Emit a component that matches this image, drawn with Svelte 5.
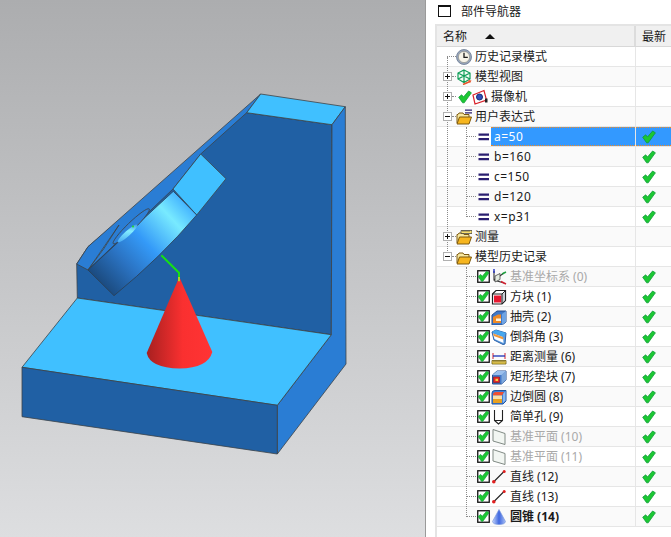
<script>
    // Tree rows of the part navigator
    const rows = [
        { label: "历史记录模式", icon: "clock", stub: "long" },
        { label: "模型视图", icon: "views", toggle: "+" },
        { label: "摄像机", icon: "camera", toggle: "+", tick: true },
        { label: "用户表达式", icon: "folderExpr", toggle: "-" },
        { label: "a=50", icon: "eq", level: 1, latest: true, selected: true },
        { label: "b=160", icon: "eq", level: 1, latest: true },
        { label: "c=150", icon: "eq", level: 1, latest: true },
        { label: "d=120", icon: "eq", level: 1, latest: true },
        { label: "x=p31", icon: "eq", level: 1, latest: true },
        { label: "测量", icon: "folderRuler", toggle: "+" },
        { label: "模型历史记录", icon: "folder", toggle: "-" },
        { label: "基准坐标系 (0)", icon: "datum", level: 1, box: true, latest: true, muted: true },
        { label: "方块 (1)", icon: "block", level: 1, box: true, latest: true },
        { label: "抽壳 (2)", icon: "shell", level: 1, box: true, latest: true },
        { label: "倒斜角 (3)", icon: "chamfer", level: 1, box: true, latest: true },
        { label: "距离测量 (6)", icon: "measure", level: 1, box: true, latest: true },
        { label: "矩形垫块 (7)", icon: "pad", level: 1, box: true, latest: true },
        { label: "边倒圆 (8)", icon: "blend", level: 1, box: true, latest: true },
        { label: "简单孔 (9)", icon: "hole", level: 1, box: true, latest: true },
        { label: "基准平面 (10)", icon: "plane", level: 1, box: true, latest: true, muted: true },
        { label: "基准平面 (11)", icon: "plane", level: 1, box: true, latest: true, muted: true },
        { label: "直线 (12)", icon: "line", level: 1, box: true, latest: true },
        { label: "直线 (13)", icon: "line", level: 1, box: true, latest: true },
        { label: "圆锥 (14)", icon: "cone", level: 1, box: true, latest: true, bold: true }
    ];

    const rowH = 20;

    // Dotted vertical guides: x inside the tree, first and last row
    const guides = [
        { x: 10, top: 10, bottom: 10 * rowH + 10 },
        { x: 29, top: 4 * rowH, bottom: 8 * rowH + 10 },
        { x: 29, top: 11 * rowH, bottom: 23 * rowH + 10 }
    ];
</script>

{#snippet tickMark()}
    <path d="M0.700 7.200L3.700 4.800L5.500 7L10.600 1L13.400 2.800L6.200 12.800H4.600Z" fill="#1cc832" stroke="#0f9c3a" stroke-width="0.800" />
{/snippet}

{#snippet icon(name)}
    {#if name === "eq"}
        <svg width="14" height="16" viewBox="0 0 14 16"><path d="M1.500 4.500h10.500v2.300H1.500zM1.500 9h10.500v2.300H1.500z" fill="#2b1f70" /></svg>
    {:else}
        <svg width="16" height="16" viewBox="0 0 16 16">
            {#if name === "clock"}
                <circle cx="8" cy="8" r="7.500" fill="#98a6bc" stroke="#6a7890" stroke-width="0.800" />
                <circle cx="8" cy="8" r="5.600" fill="#f6f3e8" stroke="#8a8a80" stroke-width="0.600" />
                <path d="M8 3.800V8.300H11.800" fill="none" stroke="#1c1c1c" stroke-width="1.300" />
            {:else if name === "views"}
                <path d="M8 1L14 4V10L8 13.500L2 10V4Z" fill="#f2fbf5" />
                <path d="M8 1L14 4V10L8 13.500L2 10V4Z M2 4L8 7L14 4 M8 7V13.500 M2 10L8 7L14 10 M8 1V7" fill="none" stroke="#0f9e58" stroke-width="1.200" />
                <path d="M7 15.500L14 12.500" stroke="#e8552a" stroke-width="1.600" />
                <path d="M12 11L15.500 11.500L14 14Z" fill="#e8552a" />
            {:else if name === "camera"}
                <path d="M1 6L12 1.500L14.500 11L3 15Z" fill="#fff" stroke="#d8202a" stroke-width="1.200" />
                <circle cx="7.500" cy="8" r="3" fill="#2f4fb8" stroke="#1b2c78" />
                <path d="M13 9.500h2.500v4H13z" fill="#222" />
            {:else if name === "folder" || name === "folderExpr" || name === "folderRuler"}
                <path d="M1 14V5.500H2L3 4H7L8 5.500H13V8" fill="#f8e8a0" stroke="#7d5a10" />
                <path d="M1 15L3.500 8H15.500L13 15Z" fill="#f6b51e" stroke="#7d5a10" />
                {#if name === "folderExpr"}
                    <path d="M9 0.500h7v1.200H9zM9 3.300h7v1.200H9z" fill="#2b1f70" />
                {:else if name === "folderRuler"}
                    <path d="M5 1.500h11v3H5z" fill="#f8e070" stroke="#333" stroke-width="0.700" />
                    <path d="M7 1.500v1.500M9 1.500v1.500M11 1.500v1.500M13 1.500v1.500" stroke="#333" stroke-width="0.600" />
                {/if}
            {:else if name === "datum"}
                <path d="M3 2V11L13 14M3 11L13 4" fill="none" stroke="#333" stroke-width="1.100" />
                <path d="M4 7L9 4.500V10.500L4 13Z" fill="#e4ece0" stroke="#444" stroke-width="0.800" />
                <path d="M3 0V4" stroke="#2030c0" stroke-width="1.400" />
                <path d="M10 12.500L15 15" stroke="#d02030" stroke-width="1.400" />
                <path d="M11 5L15 3" stroke="#20a040" stroke-width="1.400" />
            {:else if name === "block"}
                <path d="M1.500 5L5 1.500H14.500V11.500L11 15H1.500Z" fill="#fff" stroke="#222" stroke-width="1.200" />
                <path d="M3 6.500H10.500V13.500H3Z" fill="#e81830" />
                <path d="M10.500 6L14 2.500V11L10.500 14Z" fill="#c8ccd4" />
                <path d="M1.500 5H11V15M11 5L14.500 1.500" fill="none" stroke="#222" />
            {:else if name === "shell"}
                <path d="M1 6L6 2H15V13L11 16H1Z" fill="#3f78c8" stroke="#274f90" />
                <path d="M11 5L15 2V13L11 16Z" fill="#6ea4e4" />
                <path d="M2 8L7 5.500H10V14H2Z" fill="#f08a24" />
                <path d="M5 9.500H10V12H5Z" fill="#fff2d8" />
            {:else if name === "chamfer"}
                <path d="M1 3L5 1L15 4L14 15L12 15.500L3 11Z" fill="#5a9be0" stroke="#2d62a8" />
                <path d="M2 4.500L12 8L12.500 14L3.500 10Z" fill="#fff" />
                <path d="M2 4.500L12 8L12.300 10.500L2.800 7Z" fill="#f29a3a" />
                <path d="M1 3L5 1L15 4L12 7.500Z" fill="#47a8ee" />
            {:else if name === "measure"}
                <path d="M1 11.500H15V15H1Z" fill="#f8d850" stroke="#6a5a10" stroke-width="0.800" />
                <path d="M3 12v1.500M5 12v1.500M7 12v1.500M9 12v1.500M11 12v1.500M13 12v1.500" stroke="#333" stroke-width="0.700" />
                <path d="M2 4V10M14 4V10" stroke="#d02030" stroke-width="1" />
                <path d="M2 7H14" stroke="#1830b8" stroke-width="1.300" />
            {:else if name === "pad"}
                <path d="M1.500 6L6 2H15V11L10.500 15H1.500Z" fill="#4478c8" stroke="#2a5090" />
                <path d="M10.500 6L15 2V11L10.500 15Z" fill="#7ea8dc" />
                <path d="M1.500 6L6 2H15L10.500 6Z" fill="#9cc0ec" />
                <path d="M2.500 8H8.500V13.500H2.500Z" fill="#e42828" stroke="#901818" stroke-width="0.600" />
                <path d="M4.500 9.800H7V12H4.500Z" fill="#f8d040" />
            {:else if name === "blend"}
                <path d="M1 4Q1 1.500 4 1.500H15V12L12 15H1Z" fill="#3f80d8" stroke="#24559c" />
                <path d="M2 5Q2.500 3 5 3H13L11 6.500H2Z" fill="#f05030" />
                <path d="M2 6.500H11V10H2Z" fill="#f8e0a8" />
                <path d="M2 10H11V14H2Z" fill="#e8a020" />
                <path d="M12 5L14.500 2V11.500L12 14Z" fill="#88b8f0" />
            {:else if name === "hole"}
                <path d="M3.500 1V11.500L7.500 15L11.500 11.500V1M3.500 11.500H11.500" fill="none" stroke="#222" stroke-width="1.100" />
            {:else if name === "plane"}
                <path d="M2 0.500L14 4.500V15.500L2 12Z" fill="#f2f6f2" stroke="#808a84" />
            {:else if name === "line"}
                <path d="M2.500 13L13.500 2" stroke="#222" stroke-width="1.100" />
                <circle cx="2.800" cy="12.800" r="1.800" fill="#e02020" />
                <circle cx="13.200" cy="2.500" r="1.500" fill="#e02020" />
            {:else if name === "cone"}
                <path d="M8 0.500L14.500 12.500Q14 15.500 8 15.500Q2 15.500 1.500 12.500Z" fill="url(#cone-icon)" stroke="#7090d8" stroke-width="0.600" />
            {/if}
        </svg>
    {/if}
{/snippet}

<div class="app">
    <div class="viewport">
        <svg class="model" width="426" height="537" viewBox="0 0 426 537">
            <defs>
                <linearGradient id="coneFill" x1="147" y1="0" x2="212" y2="0" gradientUnits="userSpaceOnUse">
                    <stop offset="0" stop-color="#a82020" />
                    <stop offset="0.55" stop-color="#fa3030" />
                    <stop offset="1" stop-color="#ff3434" />
                </linearGradient>
                <linearGradient id="diskFill" x1="100" y1="283" x2="186" y2="203" gradientUnits="userSpaceOnUse">
                    <stop offset="0" stop-color="#1b4a7e" />
                    <stop offset="0.28" stop-color="#2b74c4" />
                    <stop offset="0.52" stop-color="#349af8" />
                    <stop offset="0.82" stop-color="#78eaff" />
                    <stop offset="1" stop-color="#44b4ff" />
                </linearGradient>
                <linearGradient id="holeFill" x1="118" y1="241" x2="137" y2="225" gradientUnits="userSpaceOnUse">
                    <stop offset="0" stop-color="#3d9cf0" />
                    <stop offset="0.6" stop-color="#84eeff" />
                    <stop offset="1" stop-color="#2f80d8" />
                </linearGradient>
                <linearGradient id="cone-icon" x1="0" y1="0" x2="1" y2="0">
                    <stop offset="0" stop-color="#c4d4fa" />
                    <stop offset="0.5" stop-color="#3f68e0" />
                    <stop offset="1" stop-color="#a8bef4" />
                </linearGradient>
            </defs>

            <g stroke="#3c4248" stroke-width="0.800" stroke-linejoin="round">
                <!-- upright wall -->
                <path class="dark" d="M76.700 264L88 246.700L246.700 112.700L332 124.700L331.300 334.700L77.300 298Z" />
                <path class="mid" d="M76.700 264L88 246.700L260.700 94L246.700 112.700L200.700 154L173 189L88 270Z" />
                <path class="light" d="M260.700 94L345.300 106.700L332 124.700L246.700 112.700Z" />
                <path class="mid" d="M345.300 106.700L346 364L277.300 454V405.300L331.300 334.700L332 124.700Z" />

                <!-- base block -->
                <path class="light" d="M77.300 298L331.300 334.700L277.300 405.300L22 367.300Z" />
                <path class="dark" d="M22 367.300L277.300 405.300V454L22 416.700Z" />

                <!-- tab behind the disk -->
                <path class="light" d="M173 189L200.700 154L226 178.700L196.700 215Z" />

                <!-- disk -->
                <path d="M88 270L173.300 191.300L196.700 215Q160 258 114 295.700Z" fill="url(#diskFill)" stroke="#2c3e50" />
                <path d="M88 270L119 225Q104 250 88 270Z" fill="#3d9cf0" />
                <ellipse cx="131.200" cy="226.300" rx="25" ry="3.800" transform="rotate(-44 131.200 226.300)" fill="#2d80d8" />
                <ellipse cx="127.500" cy="233.500" rx="13" ry="2.600" transform="rotate(-42 127.500 233.500)" fill="url(#holeFill)" stroke="none" />
            </g>
            <circle cx="133" cy="226.500" r="1" fill="#22e022" />

            <!-- cone and its sketch line -->
            <path d="M179.300 277L146.700 353Q150 368 179.500 368.500Q208 368 212.300 352Z" fill="url(#coneFill)" />
            <path d="M161.300 255.300L179 272.700V277" fill="none" stroke="#16e016" stroke-width="2" />
            <path d="M179 277V281.300" fill="none" stroke="#b4d020" stroke-width="2" />
        </svg>
    </div>

    <div class="panel">
        <div class="title">
            <span class="window-box"></span>
            <span>部件导航器</span>
        </div>

        <div class="table">
            <div class="head">
                <div class="head-name">
                    <span>名称</span>
                    <span class="sort-arrow"></span>
                </div>
                <div class="head-latest">最新</div>
            </div>

            <div class="tree">
                {#each guides as g}
                    <span class="guide" style="left: {g.x}px; top: {g.top}px; height: {g.bottom - g.top}px"></span>
                {/each}

                {#each rows as row, i}
                    <div class="row" class:alt={i % 2 === 1}>
                        <div class="name" class:nested={row.level === 1}>
                            {#if row.level === 1}
                                <span class="stub nested-stub"></span>
                                {#if row.box}
                                    <svg class="checkbox" width="13" height="13" viewBox="0 0 13 13">
                                        <rect x="0.750" y="0.750" width="11.500" height="11.500" fill="#fff" stroke="#111" stroke-width="1.300" />
                                        <g transform="translate(0.500 0.300) scale(0.860)">{@render tickMark()}</g>
                                    </svg>
                                {/if}
                            {:else}
                                <span class="stub" class:long={row.stub === "long"}></span>
                                {#if row.toggle}
                                    <span class="toggle">
                                        <svg width="9" height="9" viewBox="0 0 9 9">
                                            <rect x="0.500" y="0.500" width="8" height="8" fill="#fff" stroke="#b0b0b0" />
                                            <path d={row.toggle === "+" ? "M2 4.500H7M4.500 2V7" : "M2 4.500H7"} stroke="#111" />
                                        </svg>
                                    </span>
                                {:else}
                                    <span class="toggle"></span>
                                {/if}
                                {#if row.tick}
                                    <svg class="tick-slot" width="16" height="14" viewBox="-2 0 16 14">{@render tickMark()}</svg>
                                {/if}
                            {/if}
                            {@render icon(row.icon)}
                            <span class="label" class:selected={row.selected} class:expr={row.icon === "eq"} class:muted={row.muted} class:bold={row.bold}>{row.label}</span>
                        </div>
                        <div class="latest" class:selected={row.selected}>
                            {#if row.latest}
                                <svg width="14" height="14" viewBox="0 0 14 14">{@render tickMark()}</svg>
                            {/if}
                        </div>
                    </div>
                {/each}
            </div>
        </div>
    </div>
</div>

<style>
    :global(body) {
        margin: 0;
        overflow: hidden;
    }

    .app {
        display: flex;
        width: 671px;
        height: 537px;
        font-family: "Noto Sans", "Noto Sans CJK SC", sans-serif;
        font-size: 12px;
        color: #1a1a1a;
    }

    .viewport {
        width: 425px;
        flex: none;
        background: linear-gradient(#acadaf 0%, #dddee0 100%);
        border-right: 1px solid #9a9a9a;
        overflow: hidden;
    }

    .model {
        display: block;
    }

    .dark {
        fill: #2060a4;
    }

    .mid {
        fill: #2a7dd4;
    }

    .light {
        fill: #40c0ff;
    }

    .panel {
        flex: 1;
        min-width: 0;
        background: #fff;
        display: flex;
        flex-direction: column;
    }

    .title {
        height: 24px;
        display: flex;
        align-items: center;
        padding: 0 0 2px 12px;
        box-sizing: border-box;
    }

    .window-box {
        width: 11px;
        height: 9px;
        border: 1px solid #111;
        border-top-width: 2px;
        margin-right: 10px;
    }

    .table {
        margin-left: 9px;
        border-top: 2px solid #e4e4e4;
        border-left: 2px solid #e4e4e4;
        flex: 1;
    }

    .head {
        display: flex;
        height: 20px;
        background: #f0f0f0;
        border-bottom: 1px solid #d8d8d8;
    }

    .head-name {
        width: 199px;
        display: flex;
        align-items: center;
        padding-left: 6px;
        box-sizing: border-box;
        border-right: 2px solid #dcdcdc;
    }

    .sort-arrow {
        width: 0;
        height: 0;
        margin-left: 18px;
        border-left: 5px solid transparent;
        border-right: 5px solid transparent;
        border-bottom: 5px solid #111;
    }

    .head-latest {
        flex: 1;
        display: flex;
        align-items: center;
        padding-left: 6px;
    }

    .tree {
        position: relative;
    }

    .guide {
        position: absolute;
        width: 0;
        border-left: 1px dotted #8a8a8a;
    }

    .row {
        display: flex;
        height: 20px;
        box-sizing: border-box;
        border-bottom: 1px solid #e6e6e6;
    }

    .row.alt {
        background: #fafafa;
    }

    .name {
        position: relative;
        width: 199px;
        display: flex;
        align-items: center;
        padding-left: 6px;
        box-sizing: border-box;
        border-right: 1px solid #e6e6e6;
    }

    .name.nested {
        padding-left: 40px;
    }

    .stub {
        position: absolute;
        left: 15px;
        top: 9px;
        width: 4px;
        border-top: 1px dotted #8a8a8a;
    }

    .stub.long {
        left: 10px;
        width: 9px;
    }

    .nested-stub {
        left: 29px;
        width: 10px;
    }

    .toggle {
        position: relative;
        width: 9px;
        height: 9px;
        margin-right: 4px;
        flex: none;
        display: flex;
    }

    .checkbox {
        flex: none;
        margin-right: 1px;
    }

    .tick-slot {
        flex: none;
    }

    .name svg {
        flex: none;
    }

    .label {
        flex: 1;
        align-self: stretch;
        display: flex;
        align-items: center;
        padding: 0 0 1px 3px;
        box-sizing: border-box;
        white-space: pre;
    }

    .label.expr {
        letter-spacing: 0.5px;
    }

    .label.muted {
        color: #a9a9a9;
    }

    .label.bold {
        font-weight: 700;
    }

    .selected {
        background: #3399ff;
        color: #fff;
        border-top: 1px dotted #f08a24;
        border-bottom: 1px dotted #f08a24;
    }

    .latest {
        flex: 1;
        display: flex;
        align-items: center;
        padding-left: 6px;
    }
</style>
